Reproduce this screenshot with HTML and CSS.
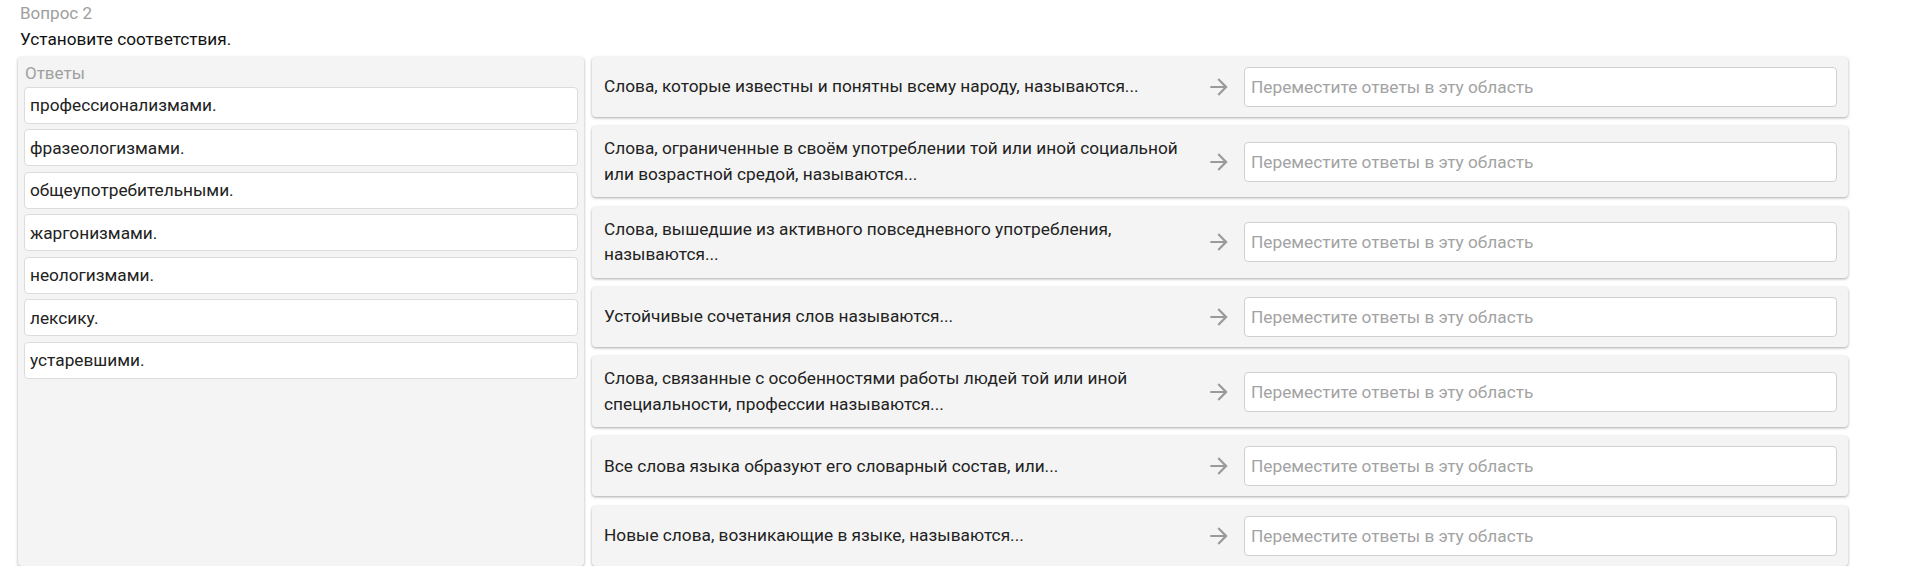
FILE: index.html
```html
<!DOCTYPE html>
<html lang="ru">
<head>
<meta charset="utf-8">
<title>Вопрос 2</title>
<link rel="stylesheet" href="styles.css">
</head>
<body>
<div class="page">
  <div class="q-num">Вопрос 2</div>
  <div class="q-text">Установите соответствия.</div>
  <div class="match">
    <div class="answers">
      <div class="answers-label">Ответы</div>
      <div class="answer">профессионализмами.</div>
      <div class="answer">фразеологизмами.</div>
      <div class="answer">общеупотребительными.</div>
      <div class="answer">жаргонизмами.</div>
      <div class="answer">неологизмами.</div>
      <div class="answer">лексику.</div>
      <div class="answer">устаревшими.</div>
    </div>
    <div class="rows">
      <div class="row">
        <div class="row-text">Слова, которые известны и понятны всему народу, называются...</div>
        <svg class="arrow" viewBox="0 0 24 24"><path d="M12 4l-1.41 1.41L16.17 11H4v2h12.17l-5.58 5.59L12 20l8-8z"/></svg>
        <div class="drop">Переместите ответы в эту область</div>
      </div>
      <div class="row">
        <div class="row-text">Слова, ограниченные в своём употреблении той или иной социальной или возрастной средой, называются...</div>
        <svg class="arrow" viewBox="0 0 24 24"><path d="M12 4l-1.41 1.41L16.17 11H4v2h12.17l-5.58 5.59L12 20l8-8z"/></svg>
        <div class="drop">Переместите ответы в эту область</div>
      </div>
      <div class="row">
        <div class="row-text">Слова, вышедшие из активного повседневного употребления, называются...</div>
        <svg class="arrow" viewBox="0 0 24 24"><path d="M12 4l-1.41 1.41L16.17 11H4v2h12.17l-5.58 5.59L12 20l8-8z"/></svg>
        <div class="drop">Переместите ответы в эту область</div>
      </div>
      <div class="row">
        <div class="row-text">Устойчивые сочетания слов называются...</div>
        <svg class="arrow" viewBox="0 0 24 24"><path d="M12 4l-1.41 1.41L16.17 11H4v2h12.17l-5.58 5.59L12 20l8-8z"/></svg>
        <div class="drop">Переместите ответы в эту область</div>
      </div>
      <div class="row">
        <div class="row-text">Слова, связанные с особенностями работы людей той или иной специальности, профессии называются...</div>
        <svg class="arrow" viewBox="0 0 24 24"><path d="M12 4l-1.41 1.41L16.17 11H4v2h12.17l-5.58 5.59L12 20l8-8z"/></svg>
        <div class="drop">Переместите ответы в эту область</div>
      </div>
      <div class="row">
        <div class="row-text">Все слова языка образуют его словарный состав, или...</div>
        <svg class="arrow" viewBox="0 0 24 24"><path d="M12 4l-1.41 1.41L16.17 11H4v2h12.17l-5.58 5.59L12 20l8-8z"/></svg>
        <div class="drop">Переместите ответы в эту область</div>
      </div>
      <div class="row">
        <div class="row-text">Новые слова, возникающие в языке, называются...</div>
        <svg class="arrow" viewBox="0 0 24 24"><path d="M12 4l-1.41 1.41L16.17 11H4v2h12.17l-5.58 5.59L12 20l8-8z"/></svg>
        <div class="drop">Переместите ответы в эту область</div>
      </div>
    </div>
  </div>
</div>
</body>
</html>
```

FILE: styles.css
```css
* { box-sizing: border-box; }
html, body { margin: 0; padding: 0; background: #fff; }
body {
  font-family: Roboto, "Liberation Sans", Arial, sans-serif;
  color: #222;
}
.page {
  padding: 2px 72px 0 18px;
}
.q-num {
  color: #9e9e9e;
  font-size: 17px;
  line-height: 22px;
  padding-left: 2px;
}
.q-text {
  color: #111;
  font-size: 17.2px;
  line-height: 22px;
  margin-top: 4px;
  padding-left: 2px;
}
.match {
  display: grid;
  grid-template-columns: 566px 1256px;
  column-gap: 8px;
  margin-top: 7px;
  align-items: stretch;
}
.answers {
  background: #f4f4f4;
  border-radius: 4px;
  box-shadow: 0 1px 3px rgba(0, 0, 0, 0.35);
  padding: 5px 6px 10px 6px;
  display: flex;
  flex-direction: column;
  gap: 5.5px;
}
.answers-label {
  color: #a0a0a0;
  font-size: 17px;
  line-height: 22px;
  padding-left: 1px;
  margin-bottom: -3px;
}
.answer {
  background: #fff;
  border: 1px solid #dcdcdc;
  border-radius: 4px;
  height: 37px;
  display: flex;
  align-items: center;
  padding: 0 5px;
  font-size: 17.25px;
  color: #222;
}
.rows {
  display: flex;
  flex-direction: column;
  gap: 9.3px;
}
.row {
  background: #f4f4f4;
  border-radius: 4px;
  box-shadow: 0 1px 3px rgba(0, 0, 0, 0.35);
  padding: 10px 11px 10px 12px;
  display: grid;
  grid-template-columns: 1fr 19px 593px;
  column-gap: 15px;
  align-items: center;
}
.row-text {
  font-size: 17.25px;
  line-height: 25.5px;
  color: #222;
}
.arrow {
  width: 26px;
  height: 26px;
  margin-left: -4px;
  fill: #9a9a9a;
  display: block;
}
.drop {
  background: #fff;
  border: 1px solid #d0d0d0;
  border-radius: 4px;
  height: 40px;
  display: flex;
  align-items: center;
  padding: 0 6px;
  font-size: 17.25px;
  color: #a3a3a3;
}
```
